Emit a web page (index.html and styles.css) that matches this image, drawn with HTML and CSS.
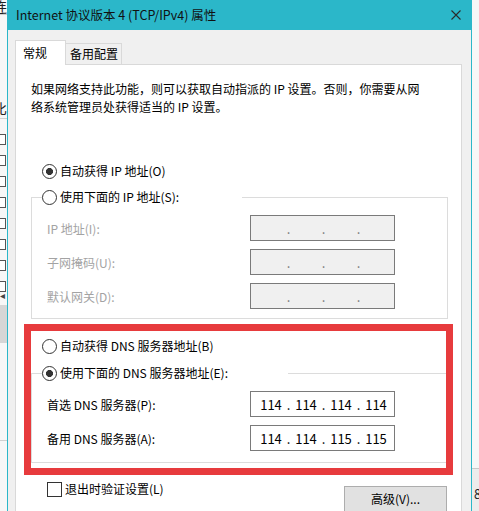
FILE: index.html
```html
<!DOCTYPE html>
<html>
    <head>
        <meta charset="utf-8">
        <title>Internet 协议版本 4 (TCP/IPv4) 属性</title>
        <link rel="stylesheet" href="styles.css">
    </head>
    <body>
        <div class="desktop">
            <!-- window behind the dialog, only its edges show -->
            <div class="back-window">
                <span class="back-char c1">连</span>
                <span class="back-line l1"></span>
                <span class="back-char c2">比</span>
                <span class="back-line l2"></span>
                <div class="back-list">
                    <span class="back-box"></span>
                    <span class="back-box"></span>
                    <span class="back-box"></span>
                    <span class="back-box"></span>
                    <span class="back-box"></span>
                    <span class="back-box"></span>
                    <span class="back-box"></span>
                    <span class="back-box"></span>
                </div>
                <span class="back-arrow">◂</span>
                <span class="back-band"></span>
                <span class="back-line l3"></span>
                <span class="back-right"><span>8</span></span>
            </div>

            <div class="dialog">
                <div class="title-bar">
                    <span class="title">Internet 协议版本 4 (TCP/IPv4) 属性</span>
                    <svg class="close" width="10" height="10" viewBox="0 0 10 10">
                        <path d="M0.5 0.5L9.5 9.5M9.5 0.5L0.5 9.5" stroke="#2b2b2b" stroke-width="1.1" fill="none"/>
                    </svg>
                </div>
                <div class="dialog-body">
                    <div class="tab-header">
                        <span class="tab-item active">常规</span>
                        <span class="tab-item">备用配置</span>
                    </div>
                    <div class="tab-panel">
                        <p class="desc">如果网络支持此功能，则可以获取自动指派的 IP 设置。否则，你需要从网<br>络系统管理员处获得适当的 IP 设置。</p>

                        <span class="radio checked option">自动获得 IP 地址(O)</span>
                        <fieldset class="group ip-group">
                            <legend><span class="radio">使用下面的 IP 地址(S):</span></legend>
                            <div class="rows">
                                <div class="field-row disabled">
                                    <span class="label">IP 地址(I):</span>
                                    <span class="ip-box"><span class="seg"></span><span class="dot">.</span><span class="seg"></span><span class="dot">.</span><span class="seg"></span><span class="dot">.</span><span class="seg"></span></span>
                                </div>
                                <div class="field-row disabled">
                                    <span class="label">子网掩码(U):</span>
                                    <span class="ip-box"><span class="seg"></span><span class="dot">.</span><span class="seg"></span><span class="dot">.</span><span class="seg"></span><span class="dot">.</span><span class="seg"></span></span>
                                </div>
                                <div class="field-row disabled">
                                    <span class="label">默认网关(D):</span>
                                    <span class="ip-box"><span class="seg"></span><span class="dot">.</span><span class="seg"></span><span class="dot">.</span><span class="seg"></span><span class="dot">.</span><span class="seg"></span></span>
                                </div>
                            </div>
                        </fieldset>

                        <div class="dns">
                            <span class="radio option">自动获得 DNS 服务器地址(B)</span>
                            <fieldset class="group dns-group">
                                <legend><span class="radio checked">使用下面的 DNS 服务器地址(E):</span></legend>
                                <div class="rows">
                                    <div class="field-row">
                                        <span class="label">首选 DNS 服务器(P):</span>
                                        <span class="ip-box"><span class="seg">114</span><span class="dot">.</span><span class="seg">114</span><span class="dot">.</span><span class="seg">114</span><span class="dot">.</span><span class="seg">114</span></span>
                                    </div>
                                    <div class="field-row">
                                        <span class="label">备用 DNS 服务器(A):</span>
                                        <span class="ip-box"><span class="seg">114</span><span class="dot">.</span><span class="seg">114</span><span class="dot">.</span><span class="seg">115</span><span class="dot">.</span><span class="seg">115</span></span>
                                    </div>
                                </div>
                            </fieldset>
                            <div class="highlight"></div>
                        </div>

                        <div class="footer-row">
                            <span class="checkbox">退出时验证设置(L)</span>
                            <span class="button">高级(V)...</span>
                        </div>
                    </div>
                </div>
            </div>
        </div>
    </body>
</html>
```

FILE: styles.css
```css
*{
    box-sizing: border-box;
}
body{
    margin: 0;
    width: 479px;
    height: 511px;
    overflow: hidden;
    font-family: "Noto Sans CJK SC", "Microsoft YaHei", sans-serif;
    font-size: 12px;
    color: #000;
    background: #f7f7f7;
}
.desktop{
    position: relative;
    width: 479px;
    height: 511px;
    overflow: hidden;
}

/* background window */
.back-window{
    position: absolute;
    inset: 0;
    background: #f7f7f7;
    color: #222;
}
.back-char{
    position: absolute;
    left: -7px;
    font-size: 14px;
    line-height: 16px;
}
.back-char.c1{ top: -2px; }
.back-char.c2{ top: 100px; }
.back-line{
    position: absolute;
    left: 0;
    width: 8px;
    height: 1px;
    background: #d0d0d0;
}
.back-line.l1{ top: 14px; }
.back-line.l2{ top: 118px; }
.back-line.l3{ top: 440px; }
.back-list{
    position: absolute;
    left: -4px;
    top: 134px;
    display: flex;
    flex-direction: column;
    gap: 10px;
    padding-right: 2px;
    border-right: 1px solid #9a9a9a;
}
.back-box{
    width: 10px;
    height: 11px;
    border: 1px solid #555;
    background: #fff;
}
.back-arrow{
    position: absolute;
    left: 0;
    top: 288px;
    font-size: 10px;
    line-height: 14px;
    color: #444;
}
.back-band{
    position: absolute;
    left: 0;
    top: 305px;
    width: 8px;
    height: 38px;
    background: #d6d6d6;
}
.back-right{
    position: absolute;
    left: 472px;
    top: 468px;
    width: 10px;
    height: 50px;
    border-top: 1px solid #c8c8c8;
    background: #ececec;
    font-size: 13px;
    line-height: 18px;
    padding: 16px 0 0 2px;
}

/* dialog */
.dialog{
    position: absolute;
    left: 7px;
    top: 0;
    width: 465px;
    height: 530px;
    border-left: 1px solid #2bb7c9;
    border-right: 1px solid #2bb7c9;
    background: #f0f0f0;
}
.title-bar{
    height: 30px;
    background: #2bb7c9;
    display: flex;
    align-items: center;
    justify-content: space-between;
    padding: 0 10px 0 8px;
    color: #111;
}
.title{
    font-size: 12.5px;
    line-height: 18px;
}
.dialog-body{
    padding: 10px 9px 0 7px;
}
.tab-header{
    display: flex;
    align-items: flex-end;
    height: 24px;
    position: relative;
    z-index: 1;
}
.tab-item{
    border: 1px solid #d9d9d9;
    border-bottom: none;
    line-height: 20px;
    height: 21px;
    padding-left: 4px;
    width: 57px;
    margin-left: -1px;
    background: #f0f0f0;
}
.tab-item.active{
    height: 25px;
    width: 51px;
    margin-left: 0;
    margin-bottom: -1px;
    padding: 2px 0 0 7px;
    background: #fff;
}
.tab-item.active + .tab-item{
    border-left: none;
    margin-left: 0;
    width: 56px;
    padding-left: 4px;
}
.tab-panel{
    background: #fff;
    border: 1px solid #d9d9d9;
    height: 480px;
    padding: 15px 13px 0 15px;
}
.desc{
    margin: 0;
    line-height: 18px;
    white-space: nowrap;
}

/* radios and groups */
.radio{
    display: flex;
    align-items: center;
    height: 18px;
    line-height: 18px;
    white-space: nowrap;
}
.radio::before{
    content: "";
    flex: none;
    width: 13px;
    height: 13px;
    margin-right: 3px;
    border: 1px solid #333;
    border-radius: 50%;
    background: #fff;
}
.radio.checked::before{
    background: radial-gradient(circle, #333 0 3.2px, #fff 3.8px);
}
.option{
    margin-left: 11px;
}
.desc + .option{
    margin-top: 46px;
}
.group{
    margin: 0;
    min-width: 0;
    border: 1px solid #dcdcdc;
    padding: 0 0 9px 15px;
}
.ip-group{
    margin-top: 8px;
}
.group legend{
    padding: 0;
    margin-left: -5px;
    background: #fff;
}
.ip-group legend{ width: 200px; }
.dns-group legend{ width: 246px; }
.rows{
    display: flex;
    flex-direction: column;
    gap: 8px;
    padding-top: 9px;
}
.field-row{
    display: grid;
    grid-template-columns: 203px 145px;
    align-items: center;
    height: 26px;
}
.field-row.disabled .label{
    color: #a3a3a3;
}
.ip-box{
    display: flex;
    align-items: center;
    height: 26px;
    padding-left: 6px;
    border: 1px solid #7a7a7a;
    background: #fff;
    font-size: 13px;
}
.field-row.disabled .ip-box{
    background: #f0f0f0;
    color: #777;
}
.seg{
    width: 28px;
    text-align: center;
}
.dot{
    width: 7px;
    text-align: center;
}

/* DNS block with the red mark over it */
.dns{
    position: relative;
    margin-top: 18px;
}
.dns-group{
    margin-top: 9px;
    padding-bottom: 11px;
}
.highlight{
    position: absolute;
    top: -13px;
    left: -7px;
    right: -5px;
    bottom: -12px;
    border: 7px solid #e73b3d;
    pointer-events: none;
}

.footer-row{
    display: flex;
    justify-content: space-between;
    align-items: flex-start;
    margin-top: 18px;
    padding-left: 16px;
}
.checkbox{
    display: flex;
    align-items: center;
    height: 16px;
    line-height: 16px;
}
.checkbox::before{
    content: "";
    width: 13px;
    height: 13px;
    margin-right: 3px;
    border: 1px solid #333;
    background: #fff;
}
.button{
    margin-top: 5px;
    margin-right: 1px;
    width: 103px;
    height: 26px;
    line-height: 24px;
    text-align: center;
    border: 1px solid #adadad;
    background: #e1e1e1;
}
```
